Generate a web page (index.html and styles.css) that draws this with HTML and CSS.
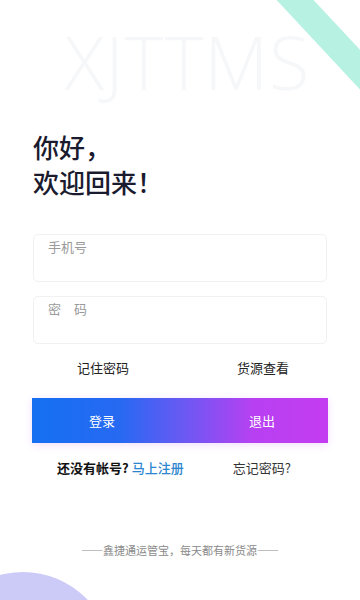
FILE: index.html
```html
<!DOCTYPE html>
<html lang="zh-CN">
<head>
<meta charset="utf-8">
<title>登录</title>
<link rel="stylesheet" href="styles.css">
</head>
<body>
<div class="screen">
  <div class="stripe"></div>
  <div class="blob"></div>
  <div class="content">
    <div class="watermark">XJTTMS</div>
    <h1 class="greeting">你好，<br>欢迎回来！</h1>
    <div class="field"><span class="placeholder">手机号</span></div>
    <div class="field field-second"><span class="placeholder">密　码</span></div>
    <div class="pair options">
      <span class="opt">记住密码</span>
      <span class="opt">货源查看</span>
    </div>
    <div class="btn pair">
      <span class="btn-label">登录</span>
      <span class="btn-label">退出</span>
    </div>
    <div class="links">
      <span class="no-account">还没有帐号? <span class="register">马上注册</span></span>
      <span class="forgot">忘记密码?</span>
    </div>
    <div class="footer">——鑫捷通运管宝，每天都有新货源——</div>
  </div>
</div>
</body>
</html>
```
FILE: styles.css
```css
html, body {
  margin: 0;
  padding: 0;
  background: #ffffff;
}
.screen {
  position: relative;
  width: 360px;
  height: 600px;
  overflow: hidden;
  background: #ffffff;
  font-family: "Noto Sans CJK SC", "Noto Sans", sans-serif;
}
.stripe {
  position: absolute;
  left: 293px;
  top: -22px;
  width: 180px;
  height: 27px;
  background: #b6f1e2;
  transform: rotate(47deg);
  transform-origin: 0 0;
}
.blob {
  position: absolute;
  left: -66px;
  top: 572px;
  width: 178px;
  height: 178px;
  border-radius: 50%;
  background: #cccbf7;
}
.content {
  position: relative;
  padding: 0 33px;
}
.watermark {
  margin: 22px 0 0 0;
  padding-left: 15px;
  text-align: center;
  font-family: "Open Sans", sans-serif;
  font-weight: 300;
  font-size: 74px;
  line-height: 80px;
  color: #f6f7f9;
  letter-spacing: 1px;
}
.greeting {
  margin: 27px 0 0 0;
  font-size: 26px;
  line-height: 35px;
  font-weight: 500;
  color: #1b1b2f;
}
.field {
  margin-top: 35px;
  height: 48px;
  border: 1px solid #f1f1f3;
  border-radius: 5px;
  padding: 3px 0 0 14px;
  box-sizing: border-box;
  font-size: 13px;
  line-height: 18px;
}
.field-second {
  margin-top: 14px;
}
.placeholder {
  font-size: 13px;
  line-height: 18px;
  color: #9a9a9a;
}
.pair {
  display: grid;
  grid-template-columns: 140px 140px;
  column-gap: 20px;
  justify-items: center;
  align-items: center;
}
.options {
  margin-top: 13px;
  height: 20px;
  font-size: 13px;
  color: #222222;
}
.btn {
  margin: 21px -1px 0 -1px;
  height: 45px;
  background: linear-gradient(90deg, #1570f1 0%, #2769f2 30%, #6d58f3 52%, #b840f2 75%, #c33cf1 100%);
  box-shadow: 0 2px 8px rgba(190, 80, 240, 0.18);
}
.btn-label {
  font-size: 13px;
  color: #ffffff;
  line-height: 45px;
}
.links {
  display: flex;
  margin-top: 15px;
  font-size: 13px;
  line-height: 20px;
}
.no-account {
  margin-left: 24px;
  font-weight: 700;
  color: #111111;
}
.register {
  font-weight: 500;
  color: #2b86cf;
}
.forgot {
  margin-left: 49px;
  color: #333333;
}
.footer {
  margin-top: 64px;
  text-align: center;
  font-size: 11px;
  line-height: 16px;
  color: #8a8a8a;
}
```
